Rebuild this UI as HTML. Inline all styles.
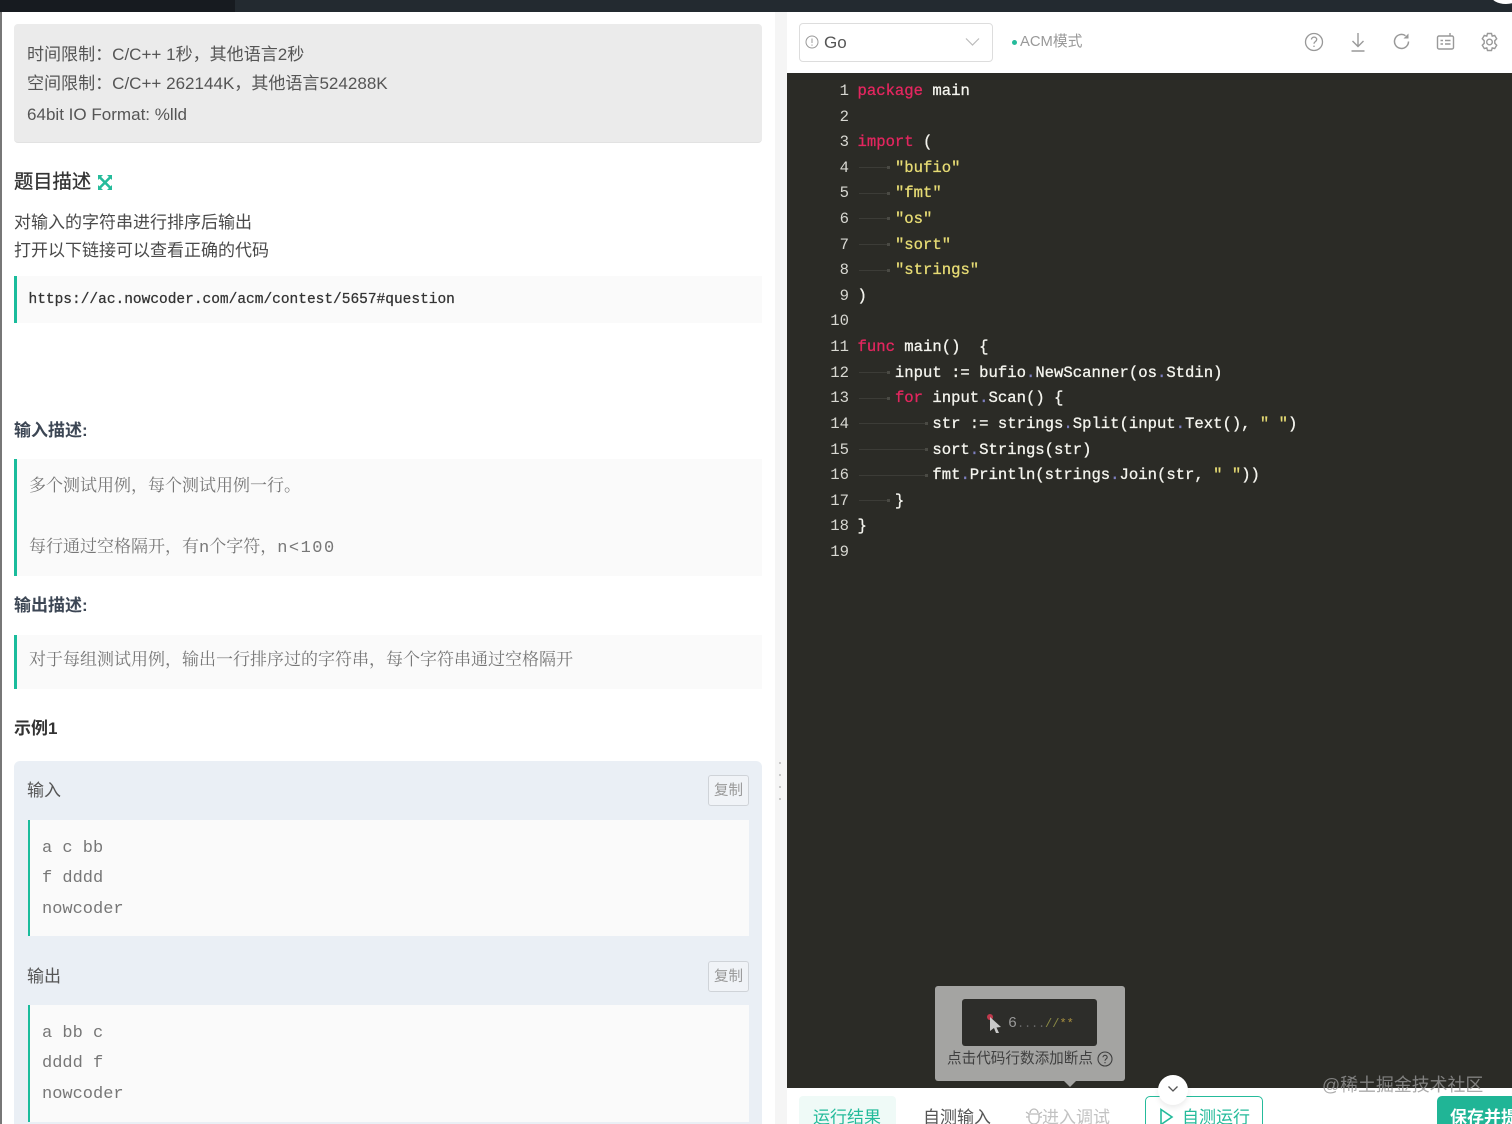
<!DOCTYPE html>
<html lang="zh"><head><meta charset="utf-8"><title>题目</title>
<style>
html,body{margin:0;padding:0;background:#fff;width:1512px;height:1124px;overflow:hidden}
#w{position:absolute;left:0;top:0;width:1512px;height:1124px;overflow:hidden;font-family:"Liberation Sans","Noto Sans CJK SC",sans-serif;color:#333;filter:blur(.35px)}
.a{position:absolute}
.t{position:absolute;white-space:pre;line-height:24px}
.info{font-size:17.05px;color:#555;left:27px}
.desc{font-size:17px;color:#4a4a4a;left:14px}
.h{font-size:17px;font-weight:700;color:#3c4654;left:14px}
.block{position:absolute;background:#fafafa;border-left:3px solid #1abc9c;box-sizing:border-box}
.serif{font-family:"Liberation Serif","Noto Serif CJK SC",serif;font-size:17px;color:#777;left:29px}
.m{font-family:"Liberation Mono",monospace}
.ex{font-family:"Liberation Mono",monospace;font-size:17px;color:#777;left:42px}
.copy{position:absolute;left:708px;width:41px;height:31px;box-sizing:border-box;border:1px solid #cfd3d8;border-radius:3px;background:#f0f3f7;color:#999;font-size:14.500px;line-height:30px;text-align:center}
.code{font-family:"Liberation Mono",monospace;font-size:15.6px;color:#f4f4ee;line-height:25.61px;position:absolute;white-space:pre;-webkit-text-stroke:.3px currentColor}
.k{color:#e3265f}.s{color:#e6db74}.d{color:#7d7fc0}
.g{position:absolute;height:1px;background:#3c3c37}
.g:after{content:"";position:absolute;right:-3px;top:-1px;width:3px;height:3px;background:#4a4a44}
</style></head>
<body>
<div id="w">
<!-- top bar -->
<div class="a" style="left:0;top:0;width:1512px;height:12px;background:#232a30"></div>
<div class="a" style="left:0;top:0;width:235px;height:12px;background:#171b20"></div>
<div class="a" style="left:1490px;top:-16px;width:32px;height:20px;border-radius:50%;background:#fff"></div>
<div class="a" style="left:0;top:12px;width:2px;height:1112px;background:#777"></div>

<!-- info -->
<div class="a" style="left:14px;top:24px;width:748px;height:119px;background:#ebebeb;border-radius:4px;border-bottom:1px solid #e2e2e2;box-sizing:border-box"></div>
<div class="t info" style="top:43px">时间限制：C/C++ 1秒，其他语言2秒</div>
<div class="t info" style="top:72px">空间限制：C/C++ 262144K，其他语言524288K</div>
<div class="t info" style="top:103px">64bit IO Format: %lld</div>

<div class="t" style="left:14px;top:171px;font-size:19.3px;color:#333;-webkit-text-stroke:.3px #333">题目描述</div>
<svg class="a" style="left:97px;top:174px" width="16" height="17" viewBox="0 0 16 17" fill="none"><path d="M3 3.5L13 13.5M13 3.5L3 13.5" stroke="#25bb9b" stroke-width="2.6"/><path d="M1 1h5L1 6zM15 1h-5l5 5zM1 16h5l-5-5zM15 16h-5l5-5z" fill="#25bb9b"/></svg>

<div class="t desc" style="top:211px">对输入的字符串进行排序后输出</div>
<div class="t desc" style="top:239px">打开以下链接可以查看正确的代码</div>

<div class="block" style="left:14px;top:276px;width:748px;height:47px"></div>
<div class="t m" style="left:28.5px;top:288px;font-size:14.5px;color:#333;-webkit-text-stroke:.25px #333">https://ac.nowcoder.com/acm/contest/5657#question</div>

<div class="t h" style="top:419px">输入描述:</div>
<div class="block" style="left:14px;top:459px;width:748px;height:117px"></div>
<div class="t serif" style="top:474px">多个测试用例，每个测试用例一行。</div>
<div class="t serif" style="top:535px">每行通过空格隔开，有<span class="m">n</span>个字符，<span class="m" style="letter-spacing:1.5px">n&lt;100</span></div>

<div class="t h" style="top:594px">输出描述:</div>
<div class="block" style="left:14px;top:635px;width:748px;height:54px"></div>
<div class="t serif" style="top:648px">对于每组测试用例，输出一行排序过的字符串，每个字符串通过空格隔开</div>

<div class="t h" style="top:717px;color:#333">示例1</div>

<!-- sample -->
<div class="a" style="left:14px;top:761px;width:748px;height:363px;background:#eaeff5;border-radius:6px 6px 0 0"></div>
<div class="t" style="left:27px;top:779px;font-size:17px;color:#555">输入</div>
<div class="copy" style="top:775px">复制</div>
<div class="block" style="left:28px;top:820px;width:721px;height:116px;border-left-width:2px"></div>
<div class="t ex" style="top:837px">a c bb</div>
<div class="t ex" style="top:867px">f dddd</div>
<div class="t ex" style="top:898px">nowcoder</div>
<div class="t" style="left:27px;top:965px;font-size:17px;color:#555">输出</div>
<div class="copy" style="top:961px">复制</div>
<div class="block" style="left:28px;top:1005px;width:721px;height:117px;border-left-width:2px"></div>
<div class="t ex" style="top:1022px">a bb c</div>
<div class="t ex" style="top:1052px">dddd f</div>
<div class="t ex" style="top:1083px">nowcoder</div>

<!-- divider -->
<div class="a" style="left:775px;top:12px;width:12px;height:1112px;background:#f5f5f5"></div>
<div class="a" style="left:779px;top:762px;width:2px;height:2px;background:#c8c8c8"></div>
<div class="a" style="left:779px;top:774px;width:2px;height:2px;background:#c8c8c8"></div>
<div class="a" style="left:779px;top:786px;width:2px;height:2px;background:#c8c8c8"></div>
<div class="a" style="left:779px;top:798px;width:2px;height:2px;background:#c8c8c8"></div>

<!-- toolbar -->
<div class="a" style="left:787px;top:12px;width:725px;height:61px;background:#fff"></div>
<div class="a" style="left:799px;top:23px;width:194px;height:39px;box-sizing:border-box;border:1px solid #ddd;border-radius:4px"></div>
<svg class="a" style="left:805px;top:35px" width="14" height="14" viewBox="0 0 14 14" fill="none" stroke="#999" stroke-width="1"><circle cx="7" cy="7" r="6"/><path d="M7 3.5v4.5M7 9.5v1.2"/></svg>
<div class="t" style="left:824px;top:31px;font-size:17px;color:#555">Go</div>
<svg class="a" style="left:965px;top:37px" width="15" height="10" viewBox="0 0 15 10" fill="none" stroke="#bbb" stroke-width="1.2"><path d="M1 1.5l6.5 6.5L14 1.5"/></svg>
<div class="a" style="left:1012px;top:40px;width:5px;height:5px;border-radius:50%;background:#25bb9b"></div>
<div class="t" style="left:1020px;top:30px;font-size:14.800px;color:#999">ACM模式</div>

<svg class="a" style="left:1304px;top:31px" width="20" height="22" viewBox="0 0 20 22" fill="none" stroke="#999" stroke-width="1.3"><circle cx="10" cy="11" r="8.5"/><path d="M7.5 8.5c0-3.2 5.2-3.2 5.2 0 0 2-2.700 2-2.700 4.300M10 14.600v1.400"/></svg>
<svg class="a" style="left:1349px;top:32px" width="18" height="20" viewBox="0 0 18 20" fill="none" stroke="#999" stroke-width="1.4"><path d="M9 1v13M3.500 9L9 14.500L14.500 9M2.500 19h13"/></svg>
<svg class="a" style="left:1393px;top:32px" width="18" height="19" viewBox="0 0 18 19" fill="none" stroke="#999" stroke-width="1.5"><path d="M15.500 9.500a7 7 0 1 1-3-5.800"/><path d="M15.500 1.500v5h-5" fill="#999" stroke="none"/></svg>
<svg class="a" style="left:1436px;top:31px" width="19" height="21" viewBox="0 0 19 21" fill="none" stroke="#999" stroke-width="1.4"><rect x="1.500" y="5" width="16" height="13" rx="1.500"/><path d="M14 5V2M4.500 9.500h2.500M9 9.500h5.500M4.500 13h2.500M9 13h5.500"/></svg>
<svg class="a" style="left:1480px;top:32px" width="19" height="20" viewBox="0 0 19 20" fill="none" stroke="#999" stroke-width="1.4"><path d="M7.500 1.500h4l.7 2.600 2.500-.7 2 3.400-1.900 1.900v2.600l1.900 1.900-2 3.400-2.500-.7-.7 2.600h-4l-.7-2.600-2.500.7-2-3.400 1.900-1.900V8.700L2.300 6.800l2-3.400 2.500.7z"/><circle cx="9.500" cy="10" r="2.800"/></svg>

<!-- editor -->
<div class="a" style="left:787px;top:73px;width:725px;height:1015px;background:#2b2b26"></div>
<div class="code" style="left:820px;top:79px;width:29px;text-align:right;color:#d8d8d2;-webkit-text-stroke:0">1
2
3
4
5
6
7
8
9
10
11
12
13
14
15
16
17
18
19</div>
<div class="code" style="left:857.500px;top:79px"><span class="k">package</span> main

<span class="k">import</span> (
    <span class="s">"bufio"</span>
    <span class="s">"fmt"</span>
    <span class="s">"os"</span>
    <span class="s">"sort"</span>
    <span class="s">"strings"</span>
)

<span class="k">func</span> main()  {
    input := bufio<span class="d">.</span>NewScanner(os<span class="d">.</span>Stdin)
    <span class="k">for</span> input<span class="d">.</span>Scan() {
        str := strings<span class="d">.</span>Split(input<span class="d">.</span>Text(), <span class="s">" "</span>)
        sort<span class="d">.</span>Strings(str)
        fmt<span class="d">.</span>Println(strings<span class="d">.</span>Join(str, <span class="s">" "</span>))
    }
}</div>
<div class="g" style="left:859px;top:167px;width:28px"></div>
<div class="g" style="left:859px;top:193px;width:28px"></div>
<div class="g" style="left:859px;top:218px;width:28px"></div>
<div class="g" style="left:859px;top:244px;width:28px"></div>
<div class="g" style="left:859px;top:270px;width:28px"></div>
<div class="g" style="left:859px;top:372px;width:28px"></div>
<div class="g" style="left:859px;top:398px;width:28px"></div>
<div class="g" style="left:859px;top:423px;width:66px"></div>
<div class="g" style="left:859px;top:449px;width:66px"></div>
<div class="g" style="left:859px;top:475px;width:66px"></div>
<div class="g" style="left:859px;top:500px;width:28px"></div>

<!-- tooltip -->
<div class="a" style="left:935px;top:986px;width:190px;height:95px;background:#a4a4a2;border-radius:3px"></div>
<div class="a" style="left:1064px;top:1081px;width:0;height:0;border-left:6px solid transparent;border-right:6px solid transparent;border-top:6px solid #a4a4a2"></div>
<div class="a" style="left:962px;top:999px;width:135px;height:47px;background:#2d2d2a;border-radius:3px"></div>
<div class="a" style="left:987px;top:1014px;width:6px;height:6px;border-radius:50%;background:#c0394c"></div>
<svg class="a" style="left:989px;top:1016px" width="13" height="18" viewBox="0 0 13 18"><path d="M1 1l11 10-4.500.5L10 17l-3 0-2-5-4 3z" fill="#c9c9c9"/></svg>
<div class="t m" style="left:1008px;top:1012px;font-size:12px;color:#999"><span style="font-size:15px">6</span><span style="color:#666;letter-spacing:-.2px">....</span><span style="color:#8a8a45">//</span><span style="color:#a8903f">**</span></div>
<div class="t" style="left:947px;top:1047px;font-size:14.6px;color:#3f3f3f">点击代码行数添加断点</div>
<svg class="a" style="left:1097px;top:1051px" width="16" height="16" viewBox="0 0 16 16" fill="none" stroke="#3f3f3f" stroke-width="1.100"><circle cx="8" cy="8" r="7"/><path d="M6 6.300c0-2.600 4.200-2.600 4.200 0 0 1.600-2.200 1.600-2.200 3.400M8 11v1.200"/></svg>

<!-- bottom -->
<div class="a" style="left:787px;top:1088px;width:725px;height:36px;background:#fff"></div>
<div class="a" style="left:799px;top:1096px;width:97px;height:28px;background:#effaf7;border-radius:4px 4px 0 0"></div>
<div class="t" style="left:813px;top:1106px;font-size:17px;color:#25bb9b">运行结果</div>
<div class="t" style="left:923px;top:1106px;font-size:17px;color:#555">自测输入</div>
<svg class="a" style="left:1025px;top:1108px" width="18" height="16" viewBox="0 0 18 16" fill="none" stroke="#bbb" stroke-width="1.300"><path d="M5 5a4 4 0 0 1 8 0M4 6h10v5a5 5 0 0 1-10 0zM1 9h3M14 9h3M1 4l3 2M17 4l-3 2"/></svg>
<div class="t" style="left:1042px;top:1106px;font-size:17px;color:#c2c2c2">进入调试</div>
<div class="a" style="left:1145px;top:1096px;width:118px;height:40px;box-sizing:border-box;border:1px solid #25bb9b;border-radius:5px"></div>
<svg class="a" style="left:1159px;top:1108px" width="15" height="18" viewBox="0 0 15 18" fill="none" stroke="#25bb9b" stroke-width="1.600"><path d="M2 1.500L13 9 2 16.500z"/></svg>
<div class="t" style="left:1182px;top:1106px;font-size:17px;color:#25bb9b">自测运行</div>
<div class="a" style="left:1437px;top:1096px;width:90px;height:40px;background:#20b596;border-radius:5px"></div>
<div class="t" style="left:1450px;top:1106px;font-size:17px;font-weight:700;color:#fff">保存并提交</div>
<div class="a" style="left:1158px;top:1075px;width:30px;height:30px;border-radius:50%;background:#fff;box-shadow:0 3px 6px rgba(0,0,0,.08)"></div>
<svg class="a" style="left:1167px;top:1085px" width="12" height="8" viewBox="0 0 12 8" fill="none" stroke="#555" stroke-width="1.300"><path d="M1.500 1.500L6 6l4.500-4.500"/></svg>
<div class="t" style="left:1322px;top:1073px;font-size:17.900px;color:rgba(150,150,150,.8)">@稀土掘金技术社区</div>
</div>
</body></html>
